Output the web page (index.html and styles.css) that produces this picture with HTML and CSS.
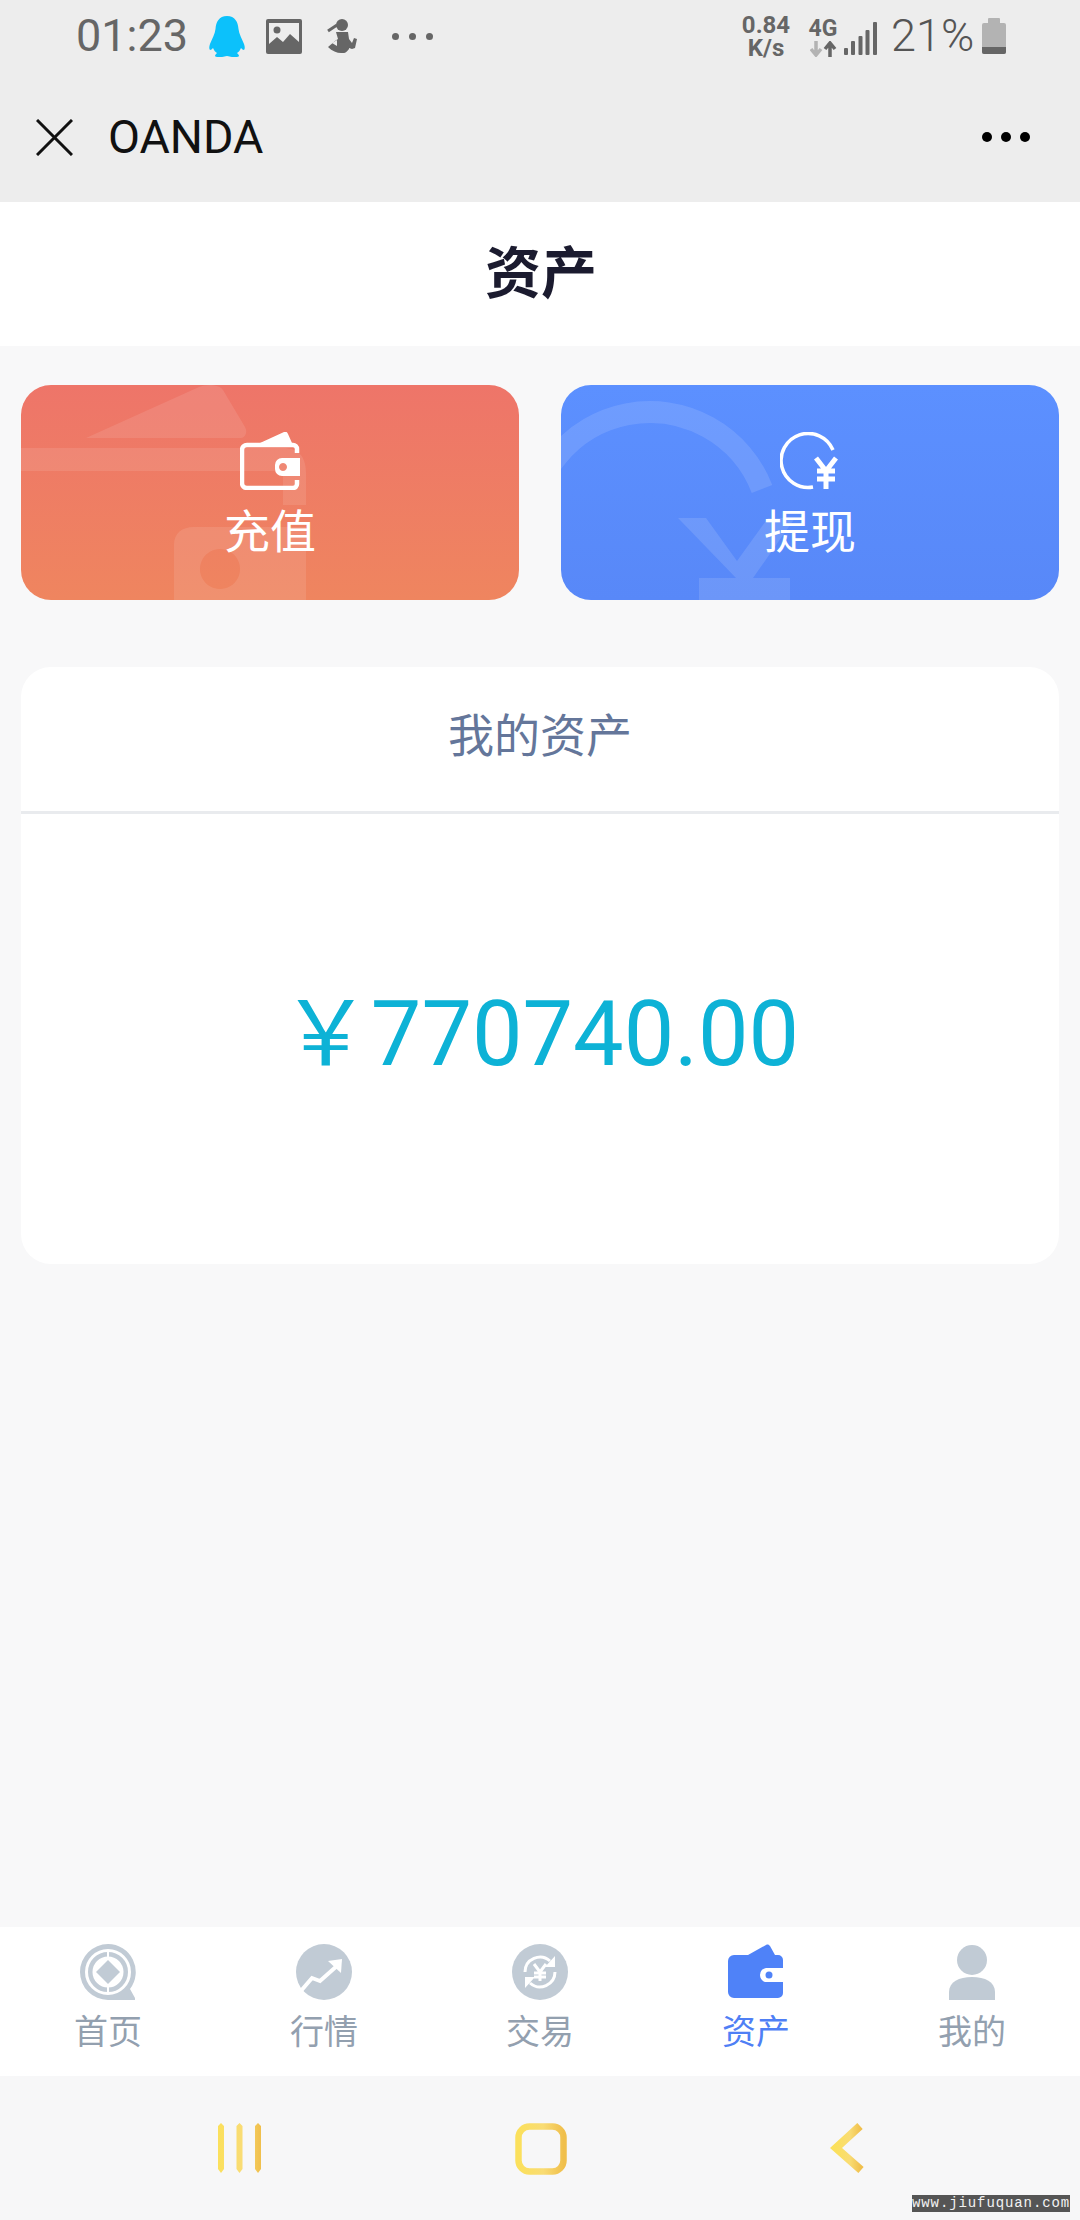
FILE: index.html
```html
<!DOCTYPE html>
<html lang="zh-CN">
<head>
<meta charset="utf-8">
<title>OANDA 资产</title>
<link rel="stylesheet" href="styles.css">
</head>
<body>
<div class="page">
  <svg width="0" height="0" class="defs">
    <defs>
      <linearGradient id="gold" x1="0" y1="0" x2="1" y2="0">
        <stop offset="0" stop-color="#fbe05c"/>
        <stop offset=".55" stop-color="#f9dc74"/>
        <stop offset="1" stop-color="#f0bf4c"/>
      </linearGradient>
    </defs>
  </svg>
  <header class="chrome">
    <div class="status">
      <span class="time">01:23</span>
      <svg class="qq" width="36" height="41" viewBox="0 0 36 41"><path fill="#0cc1fb" d="M18 0C10 0 7 6 6.500 13 6 18 3 23 1 28c-1 3-1 5 0 6 1 0 2-1 3-2 1 2 2 4 4 5-1 1-2 2-2 3 0 1 3 1 7 1 2 0 3-1 5-1s3 1 5 1c4 0 7 0 7-1 0-1-1-2-2-3 2-1 3-3 4-5 1 1 2 2 3 2 1-1 1-3 0-6-2-5-5-10-5.500-15C29 6 26 0 18 0z"/></svg>
      <svg class="pic" width="36" height="35" viewBox="0 0 36 35"><rect width="36" height="35" rx="2" fill="#666"/><rect x="3" y="4" width="30" height="26" fill="#ededed"/><circle cx="11" cy="11" r="3.500" fill="#666"/><path fill="#666" d="M3 30v-5l8-7 6 5 7-8 9 8v7z"/></svg>
      <svg class="run" width="31" height="34" viewBox="0 0 31 34"><circle cx="16" cy="6" r="6" fill="#666"/><path d="M11 6L2 12" stroke="#666" stroke-width="3" fill="none"/><path fill="#666" d="M10 13h12l1 7 3 4 2-5 3 1-2 9-3 1-3-1v1c-2 3-5 5-8 4-4 0-9-2-13-6l7-6 3-2z"/><path fill="#ededed" d="M6 24l5-3 0 6z"/></svg>
      <span class="more"><i></i><i></i><i></i></span>
      <span class="spacer"></span>
      <span class="speed"><b>0.84</b><b>K/s</b></span>
      <span class="net"><b>4G</b>
        <svg width="27" height="16" viewBox="0 0 27 16"><path d="M6 0v13M1 8l5 6 5-6" fill="none" stroke="#b3b3b3" stroke-width="3.500"/><path d="M20 16V3M15 8l5-6 5 6" fill="none" stroke="#666" stroke-width="3.500"/></svg>
      </span>
      <svg class="signal" width="33" height="33" viewBox="0 0 33 33"><rect y="26" width="4" height="7" rx="1" fill="#666"/><rect x="7" y="19" width="4" height="14" rx="1" fill="#666"/><rect x="14.500" y="14" width="4" height="19" rx="1" fill="#666"/><rect x="21.500" y="8" width="4" height="25" rx="1" fill="#666"/><rect x="29" y="0" width="4" height="33" rx="1" fill="#666"/></svg>
      <span class="pct">21%</span>
      <svg class="bat" width="24" height="36" viewBox="0 0 24 36"><rect x="6" width="12" height="6" rx="1" fill="#b3b3b3"/><rect y="5" width="24" height="31" rx="2" fill="#b3b3b3"/><path fill="#666" d="M0 29h24v5a2 2 0 0 1-2 2H2a2 2 0 0 1-2-2z"/></svg>
    </div>
    <div class="appbar">
      <svg class="close" width="37" height="37" viewBox="0 0 37 37"><path d="M1 1l35 35M36 1L1 36" stroke="#111" stroke-width="3" fill="none"/></svg>
      <span class="appname">OANDA</span>
      <span class="appdots"><i></i><i></i><i></i></span>
    </div>
  </header>

  <div class="pagetitle">资产</div>

  <main class="content">
    <section class="actions">
      <a class="action recharge">
        <svg class="deco" width="498" height="215" viewBox="0 0 498 215"><path fill="#fff" fill-opacity=".1" d="M65 53L178 2c7-3 20-3 24 3l22 37c3 5 0 11-4 11z"/><path fill="#fff" fill-opacity=".1" d="M0 63h262c15 0 23 8 23 25v32h-23V86H0z"/><path fill="#fff" fill-opacity=".1" fill-rule="evenodd" d="M153 215v-55c0-12 8-18 20-18h112v73zM199 164a20 20 0 1 0 .01 0z"/></svg>
        <svg class="aicon" width="60" height="58" viewBox="0 0 60 58"><path d="M20 11L44 0c2-1 3 0 4 2l4 9z" fill="#fff"/><path d="M57 21v-4a4 4 0 0 0-4-4H7a5 5 0 0 0-5 5v33a5 5 0 0 0 5 5h46a4 4 0 0 0 4-4v-4" fill="none" stroke="#fff" stroke-width="4.500"/><path fill="#fff" fill-rule="evenodd" d="M60 26H42a7 7 0 0 0-7 7v4a7 7 0 0 0 7 7h18zM43 31a4 4 0 1 0 .01 0z"/></svg>
        <span class="alabel">充值</span>
      </a>
      <a class="action withdraw">
        <svg class="deco" width="498" height="215" viewBox="0 0 498 215"><path d="M-31 149A120 120 0 0 1 201 104" fill="none" stroke="#fff" stroke-opacity=".12" stroke-width="22"/><path fill="#fff" fill-opacity=".12" d="M117 133h28l31 43 31-43h27l-42 60h37v22h-91v-22h37z"/></svg>
        <svg class="aicon" width="60" height="58" viewBox="0 0 60 58"><path d="M53 18A27 27 0 1 0 33 55" fill="none" stroke="#fff" stroke-width="3.500"/><path d="M36 26l10 13 10-13M46 39v18M37 39h18M37 47h18" fill="none" stroke="#fff" stroke-width="5"/></svg>
        <span class="alabel">提现</span>
      </a>
    </section>

    <section class="assets">
      <div class="assets-head">我的资产</div>
      <div class="assets-body">￥770740.00</div>
    </section>
  </main>

  <nav class="tabs">
    <a class="tab">
      <svg width="56" height="56" viewBox="0 0 56 56"><path fill="#c1cbd5" d="M28 0a28 28 0 0 1 22 45l5 9v2H28A28 28 0 0 1 28 0z"/><circle cx="28" cy="28" r="21.500" fill="none" stroke="#fff" stroke-width="3"/><circle cx="28" cy="28" r="15.500" fill="#fff"/><path d="M28 6v7M28 43v7" stroke="#fff" stroke-width="2"/><path fill="#c1cbd5" d="M28 16l12 12-12 12-12-12z"/></svg>
      <span>首页</span>
    </a>
    <a class="tab">
      <svg width="56" height="56" viewBox="0 0 56 56"><circle cx="28" cy="28" r="28" fill="#c1cbd5"/><path d="M4 48l12-14 8 3 18-16" fill="none" stroke="#fff" stroke-width="4"/><path fill="#fff" d="M32 17l14-2-1 14z"/></svg>
      <span>行情</span>
    </a>
    <a class="tab">
      <svg width="56" height="56" viewBox="0 0 56 56"><circle cx="28" cy="28" r="28" fill="#c1cbd5"/><path d="M13 28a15 15 0 0 1 25-11M43 28a15 15 0 0 1-25 11" fill="none" stroke="#fff" stroke-width="3"/><path fill="#fff" d="M43 12v11H33zM13 44V33h10z"/><path d="M22 20l6 8 6-8M28 28v9M22 29h12M22 33h12" fill="none" stroke="#fff" stroke-width="3"/></svg>
      <span>交易</span>
    </a>
    <a class="tab active">
      <svg width="56" height="56" viewBox="0 0 56 56"><path fill="#4f82f8" d="M20 11L38 1c2-1 3 0 4 1l5 9zM6 11h44a5 5 0 0 1 5 5v8H38a7 7 0 0 0-6 7c0 4 3 7 6 7h17v11a5 5 0 0 1-5 5H6a6 6 0 0 1-6-6V17a6 6 0 0 1 6-6z"/><circle cx="41" cy="31" r="3.500" fill="#4f82f8"/></svg>
      <span>资产</span>
    </a>
    <a class="tab">
      <svg width="56" height="56" viewBox="0 0 56 56"><circle cx="28" cy="16" r="15" fill="#c1cbd5"/><path fill="#c1cbd5" d="M5 56v-8c0-10 10-15 23-15s23 5 23 15v8z"/></svg>
      <span>我的</span>
    </a>
  </nav>

  <footer class="sysnav">
    <svg width="46" height="50" viewBox="0 0 46 50"><path fill="url(#gold)" d="M1 3l3-3 3 3v43l-3 4-3-4zM19.500 3l3-3 3 3v43l-3 4-3-4zM38 3l3-3 3 3v43l-3 4-3-4z"/></svg>
    <svg width="52" height="52" viewBox="0 0 52 52"><rect x="3.500" y="3.500" width="45" height="45" rx="11" fill="none" stroke="url(#gold)" stroke-width="6.500"/></svg>
    <svg width="34" height="50" viewBox="0 0 34 50"><path d="M30 3L6 25l25 22" fill="none" stroke="url(#gold)" stroke-width="8"/></svg>
    <span class="mark">www.jiufuquan.com</span>
  </footer>
</div>
</body>
</html>
```

FILE: styles.css
```css
* { box-sizing: border-box; }
html, body { margin: 0; padding: 0; }
body { font-family: Roboto, "Noto Sans CJK SC", sans-serif; background: #f8f8f9; }
.defs { position: absolute; }
.page { width: 1080px; height: 2220px; display: flex; flex-direction: column; overflow: hidden; position: relative; }

.chrome { background: #ededed; height: 202px; flex: none; }
.status { height: 72px; display: flex; align-items: center; padding: 0 74px 0 76px; color: #666; }
.time { font-size: 45px; line-height: 72px; width: 108px; margin-right: 25px; white-space: nowrap; }
.qq { margin-right: 21px; }
.pic { margin-right: 24px; }
.run { margin-right: 35px; }
.more { display: flex; gap: 10px; }
.more i { width: 7px; height: 7px; border-radius: 50%; background: #666; display: block; }
.spacer { flex: 1; }
.speed { display: flex; flex-direction: column; align-items: center; width: 48px; margin-right: 19px; font-size: 24px; line-height: 23px; margin-top: 2px; }
.speed b, .net b { font-weight: 700; display: block; }
.net { display: flex; flex-direction: column; align-items: center; width: 28px; font-size: 23px; line-height: 24px; margin-right: 7px; margin-top: 2px; }
.net svg { display: block; }
.signal { margin-right: 14px; margin-top: 4px; }
.pct { font-size: 45px; font-weight: 300; color: #555; width: 82px; margin-right: 9px; line-height: 72px; white-space: nowrap; }
.bat { margin-top: 0; }

.appbar { height: 130px; display: flex; align-items: center; padding: 0 50px 0 36px; }
.close { margin-right: 35px; }
.appname { font-size: 46.500px; color: #111; flex: 1; line-height: 1; }
.appdots { display: flex; gap: 9px; }
.appdots i { width: 10px; height: 10px; border-radius: 50%; background: #000; display: block; }

.pagetitle { background: #fff; height: 144px; flex: none; display: flex; align-items: center; justify-content: center; font-size: 56px; font-weight: 700; color: #1b1b2f; padding-bottom: 11px; padding-left: 2px; }

.content { flex: 1; padding: 39px 21px 0; display: flex; flex-direction: column; gap: 67px; }
.actions { display: flex; justify-content: space-between; }
.action { width: 498px; height: 215px; border-radius: 30px; overflow: hidden; position: relative; display: flex; flex-direction: column; align-items: center; padding-top: 47px; color: #fff; }
.recharge { background: linear-gradient(180deg, #ee7569, #ef855f); }
.withdraw { background: linear-gradient(180deg, #5c90ff, #5888f8); }
.deco { position: absolute; left: 0; top: 0; }
.aicon { position: relative; flex: none; }
.alabel { position: relative; font-size: 46px; line-height: 60px; margin-top: 12px; }

.assets { background: #fff; border-radius: 30px; height: 597px; display: flex; flex-direction: column; }
.assets-head { height: 147px; flex: none; border-bottom: 3px solid #e9ebee; display: flex; align-items: center; justify-content: center; font-size: 46px; color: #64769a; padding-bottom: 14px; }
.assets-body { flex: 1; display: flex; align-items: center; justify-content: center; font-size: 90px; color: #0db2d6; padding-bottom: 26px; }

.tabs { height: 149px; flex: none; background: #fff; display: flex; }
.tab { flex: 1; display: flex; flex-direction: column; align-items: center; padding-top: 17px; color: #93a0af; font-size: 34px; line-height: 46px; }
.tab svg { margin-bottom: 9px; flex: none; }
.tab.active { color: #4f7ff5; }

.sysnav { height: 144px; flex: none; background: #f7f7f8; display: flex; align-items: flex-start; padding: 47px 0 0 217px; position: relative; }
.sysnav svg:nth-child(1) { margin-right: 252px; }
.sysnav svg:nth-child(2) { margin-right: 263px; }
.mark { position: absolute; right: 10px; bottom: 8px; width: 158px; height: 17px; background: #555; color: #f2f2f2; font-family: "Liberation Mono", monospace; font-size: 14px; line-height: 17px; text-align: center; letter-spacing: .9px; white-space: nowrap; overflow: hidden; }
```
